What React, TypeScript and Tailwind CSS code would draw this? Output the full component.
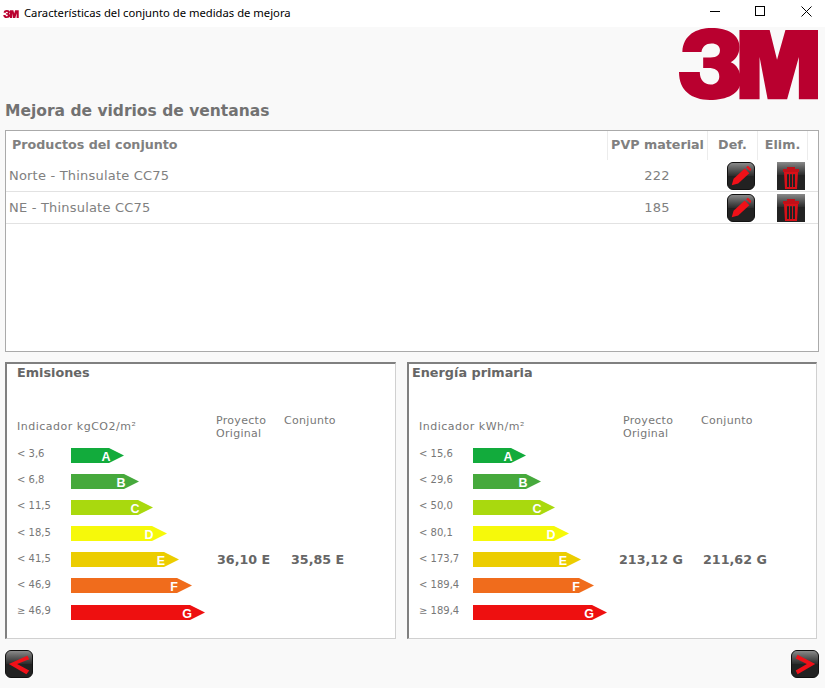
import React from 'react';

const DV = "font-['DejaVu_Sans',sans-serif]";

const Logo3M: React.FC<{ className?: string }> = ({ className }) => (
  <svg viewBox="238 84 414 214" className={className} fill="#b9002f">
    <path d="M248 155C250 105 290 84 335 84C385 84 418 105 418 140C418 165 405 178 392 186C410 193 422 212 422 240C422 280 380 298 330 298C275 298 238 270 238 215L300 215C300 238 312 252 332 252C350 252 358 240 358 228C358 210 345 203 325 203L310 203L310 172L325 172C345 172 360 168 360 150C360 138 350 130 335 130C318 130 307 140 305 155Z" />
    <path d="M418 90L508 90L530 178L555 90L652 90L652 296L595 296L595 170L560 296L502 296L478 170L478 296L418 296Z" />
  </svg>
);

const DarkButton: React.FC<{ square?: boolean; children: React.ReactNode }> = ({ square, children }) => (
  <div className={`relative w-[28px] h-[28px] overflow-hidden bg-[#222222] ${square ? '' : 'rounded-[6px] border border-[#111111]'}`}>
    <div className="absolute inset-x-0 top-0 h-[13px] bg-gradient-to-b from-[#8a8a8a] to-[#2c2c2c]" />
    <svg viewBox="0 0 28 28" className="absolute inset-0 w-full h-full">{children}</svg>
  </div>
);

const PencilIcon = () => (
  <DarkButton>
    <path d="M4 24L6 17L18 6L23 11L11 22Z" fill="#f01018" />
    <path d="M19.5 4.5L21.5 3L25 6.5L24 9Z" fill="#f01018" />
  </DarkButton>
);

const TrashIcon = () => (
  <DarkButton square>
    <path d="M6 7H22V10H6Z M10 5H18V7H10Z" fill="#c01018" />
    <path d="M7 10H21L20 27H8ZM10 12V25H12V12ZM13 12V25H15V12ZM16 12V25H18V12Z" fill="#d81018" fillRule="evenodd" />
  </DarkButton>
);

const ArrowButton: React.FC<{ dir: 'left' | 'right' }> = ({ dir }) => (
  <DarkButton>
    {dir === 'left' ? (
      <path d="M3 14L23 5L25 9L12 14L25 21L22 25Z" fill="#f01018" />
    ) : (
      <path d="M25 14L6 4L4 8L16 14L4 21L6 25Z" fill="#f01018" />
    )}
  </DarkButton>
);

const bars = [
  { letter: 'A', width: 53, color: '#12ab3c' },
  { letter: 'B', width: 68, color: '#46a93c' },
  { letter: 'C', width: 82, color: '#a9d90e' },
  { letter: 'D', width: 96, color: '#f6f90a' },
  { letter: 'E', width: 108, color: '#eccd00' },
  { letter: 'F', width: 121, color: '#f06c1c' },
  { letter: 'G', width: 134, color: '#ee1010' },
];

const EnergyBar: React.FC<{ letter: string; width: number; color: string }> = ({ letter, width, color }) => (
  <svg width={width} height={15} className="block">
    <polygon points={`0,0 ${width - 15},0 ${width},7.5 ${width - 15},15 0,15`} fill={color} />
    <text
      x={width - 18}
      y={12.5}
      textAnchor="middle"
      fontSize={12.5}
      fontWeight={700}
      fill="#ffffff"
      fontFamily="'Liberation Sans', sans-serif"
    >
      {letter}
    </text>
  </svg>
);

interface PanelProps {
  title: string;
  unit: string;
  limits: string[];
  original: string;
  conjunto: string;
  className: string;
  titlePad: string;
  labelW: string;
  col1: string;
  val1: string;
}

const Panel: React.FC<PanelProps> = ({ title, unit, limits, original, conjunto, className, titlePad, labelW, col1, val1 }) => (
  <div className={`h-[277px] bg-white border-t-2 border-l-2 border-t-[#808080] border-l-[#808080] border-r border-b border-r-[#d0d0d0] border-b-[#d0d0d0] ${className}`}>
    <h3 className={`pt-[1px] text-[12.8px] leading-[16px] font-bold text-[#666666] ${titlePad}`}>{title}</h3>
    <div className="flex mt-[33px] pl-[10px] h-[27px] text-[11px] leading-[13px] text-[#777777] tracking-[0.3px]">
      <div className={`${labelW} pt-[6px] tracking-[0.5px]`}>{unit}</div>
      <div className={col1}>Proyecto<br />Original</div>
      <div>Conjunto</div>
    </div>
    <div className="mt-[1px]">
      {bars.map((b, i) => (
        <div key={b.letter} className="flex items-center h-[26.17px] pl-[10px]">
          <div className="w-[54px] text-[10px] text-[#777777] -mt-[3px]">{limits[i]}</div>
          <EnergyBar {...b} />
          {b.letter === 'E' && (
            <div className="absolute flex text-[12.7px] font-bold text-[#666666]">
              <span className={val1}>{original}</span>
              <span>{conjunto}</span>
            </div>
          )}
        </div>
      ))}
    </div>
  </div>
);

const rows = [
  { name: 'Norte - Thinsulate CC75', pvp: '222' },
  { name: 'NE - Thinsulate CC75', pvp: '185' },
];

export default function App() {
  return (
    <div className={`w-[825px] h-[688px] overflow-hidden bg-[#f9f9f9] ${DV}`}>
      {/* title bar */}
      <div className="h-[27px] bg-white flex items-center pl-[3px]">
        <Logo3M className="w-[16px] h-[8px]" />
        <span className="ml-[5px] text-[11.25px] text-black font-['Noto_Sans',sans-serif]">Características del conjunto de medidas de mejora</span>
        <div className="ml-auto flex items-center">
          <svg width="46" height="27" viewBox="0 0 46 27"><path d="M23 11.5H33" stroke="#000" /></svg>
          <svg width="46" height="27" viewBox="0 0 46 27"><rect x="22.5" y="6.5" width="9" height="9" fill="none" stroke="#000" /></svg>
          <svg width="46" height="27" viewBox="0 0 46 27"><path d="M22.5 6.5L32.5 16.5M32.5 6.5L22.5 16.5" stroke="#000" /></svg>
        </div>
      </div>

      <div className="flex justify-end pr-[7px] pt-[1px]">
        <Logo3M className="w-[139px] h-[72px]" />
      </div>

      <h1 className="pl-[5px] mt-[1px] text-[15.5px] leading-[20px] font-bold text-[#727272]">Mejora de vidrios de ventanas</h1>

      {/* products table */}
      <div className="ml-[5px] mt-[9px] w-[814px] h-[222px] bg-white border border-[#aaaaaa]">
        <div className="flex h-[29px] items-center text-[12.7px] font-bold text-[#808080]">
          <div className="w-[601px] pl-[6px] pb-[2px]">Productos del conjunto</div>
          <div className="w-[100px] h-full pb-[2px] flex items-center justify-center border-l border-[#ececec] whitespace-nowrap">PVP material</div>
          <div className="w-[50px] h-full pb-[2px] flex items-center justify-center border-l border-[#ececec]">Def.</div>
          <div className="w-[50px] h-full pb-[2px] flex items-center justify-center border-l border-[#ececec]">Elim.</div>
          <div className="h-full border-l border-[#ececec]" />
        </div>
        {rows.map((r) => (
          <div key={r.name} className="flex items-center h-[32px] border-b border-[#e2e2e2] text-[13px] text-[#808080] tracking-[0.2px]">
            <div className="w-[601px] pl-[3px]">{r.name}</div>
            <div className="w-[100px] text-center">{r.pvp}</div>
            <div className="w-[50px] pl-[20px]"><PencilIcon /></div>
            <div className="w-[50px] pl-[20px]"><TrashIcon /></div>
          </div>
        ))}
      </div>

      {/* energy panels */}
      <div className="flex ml-[5px] mt-[10px] gap-[11px]">
        <Panel
          title="Emisiones"
          unit="Indicador kgCO2/m²"
          limits={['< 3,6', '< 6,8', '< 11,5', '< 18,5', '< 41,5', '< 46,9', '≥ 46,9']}
          original="36,10 E"
          conjunto="35,85 E"
          className="w-[391px]"
          titlePad="pl-[10px]"
          labelW="w-[199px]"
          col1="w-[68px]"
          val1="ml-[200px] w-[74px]"
        />
        <Panel
          title="Energía primaria"
          unit="Indicador kWh/m²"
          limits={['< 15,6', '< 29,6', '< 50,0', '< 80,1', '< 173,7', '< 189,4', '≥ 189,4']}
          original="213,12 G"
          conjunto="211,62 G"
          className="w-[410px]"
          titlePad="pl-[3px]"
          labelW="w-[204px]"
          col1="w-[78px]"
          val1="ml-[200px] w-[84px]"
        />
      </div>

      {/* navigation */}
      <div className="flex justify-between pl-[5px] pr-[6px] mt-[11px]">
        <ArrowButton dir="left" />
        <ArrowButton dir="right" />
      </div>
    </div>
  );
}
